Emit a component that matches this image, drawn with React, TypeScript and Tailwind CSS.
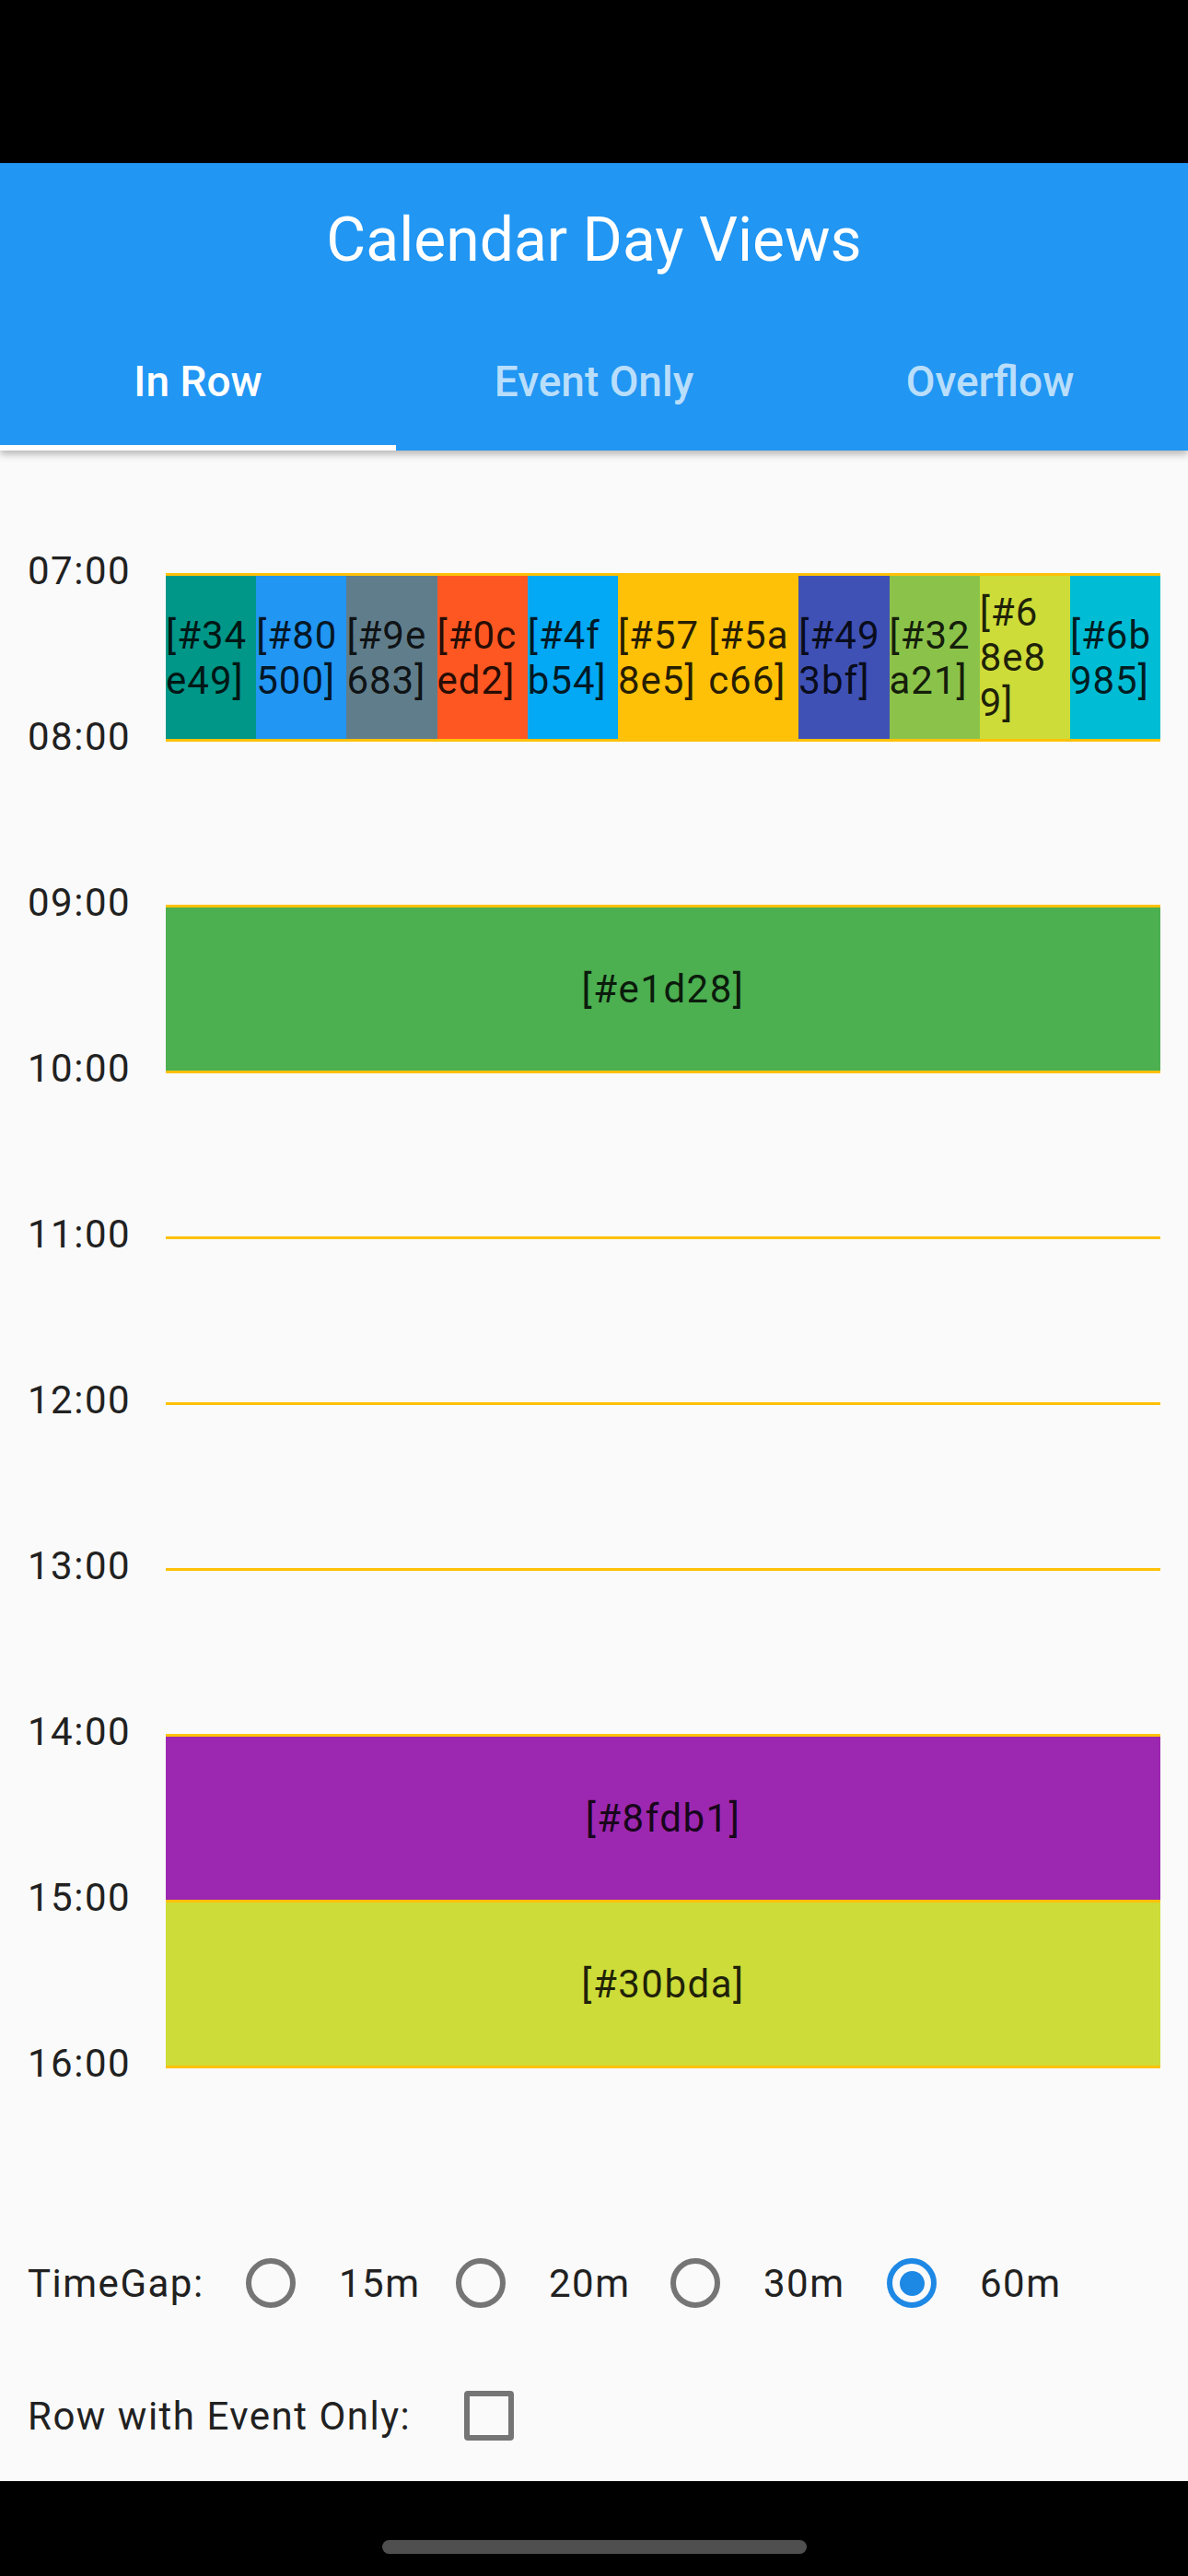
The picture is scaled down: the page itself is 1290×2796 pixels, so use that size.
import React from "react";

type Col = { bg: string; lines: string[] };

const multi: Col[] = [
  { bg: "bg-[#009688]", lines: ["[#34", "e49]"] },
  { bg: "bg-[#2196f3]", lines: ["[#80", "500]"] },
  { bg: "bg-[#607d8b]", lines: ["[#9e", "683]"] },
  { bg: "bg-[#ff5722]", lines: ["[#0c", "ed2]"] },
  { bg: "bg-[#03a9f4]", lines: ["[#4f", "b54]"] },
  { bg: "bg-[#ffc107]", lines: ["[#57", "8e5]"] },
  { bg: "bg-[#ffc107]", lines: ["[#5a", "c66]"] },
  { bg: "bg-[#3f51b5]", lines: ["[#49", "3bf]"] },
  { bg: "bg-[#8bc34a]", lines: ["[#32", "a21]"] },
  { bg: "bg-[#cddc39]", lines: ["[#6", "8e8", "9]"] },
  { bg: "bg-[#00bcd4]", lines: ["[#6b", "985]"] },
];

type Row = { h: string; kind: "multi" | "single" | "empty"; bg?: string; text?: string };

const rows: Row[] = [
  { h: "07:00", kind: "multi" },
  { h: "08:00", kind: "empty" },
  { h: "09:00", kind: "single", bg: "bg-[#4caf50]", text: "[#e1d28]" },
  { h: "10:00", kind: "empty" },
  { h: "11:00", kind: "empty" },
  { h: "12:00", kind: "empty" },
  { h: "13:00", kind: "empty" },
  { h: "14:00", kind: "single", bg: "bg-[#9c27b0]", text: "[#8fdb1]" },
  { h: "15:00", kind: "single", bg: "bg-[#cddc39]", text: "[#30bda]" },
];

function Label({ text }: { text: string }) {
  return (
    <div className="w-[180px] shrink-0 pl-[30px]">
      <div className="-mt-[27px] text-[42px] leading-[49px] tracking-[1.5px] text-[#212121] whitespace-nowrap">
        {text}
      </div>
    </div>
  );
}

function Radio({ checked }: { checked?: boolean }) {
  return (
    <div
      className={
        checked
          ? "w-[54px] h-[54px] shrink-0 rounded-full border-[6px] border-[#1e88e5] flex items-center justify-center"
          : "w-[54px] h-[54px] shrink-0 rounded-full border-[6px] border-[#757575]"
      }
    >
      {checked && <div className="w-[27px] h-[27px] rounded-full bg-[#1e88e5]" />}
    </div>
  );
}

export default function App() {
  return (
    <div className="w-[1290px] h-[2796px] flex flex-col bg-[#fafafa] font-['Roboto',sans-serif] overflow-hidden">
      {/* status bar */}
      <div className="h-[177px] shrink-0 bg-black" />

      {/* app bar */}
      <div className="relative z-10 shrink-0 bg-[#2196f3] shadow-[0_4px_8px_rgba(0,0,0,0.28)]">
        <div className="h-[168px] flex items-center justify-center">
          <span className="text-white text-[66px] font-normal leading-none">Calendar Day Views</span>
        </div>
        <div className="h-[144px] grid grid-cols-3">
          {[
            { t: "In Row", sel: true },
            { t: "Event Only", sel: false },
            { t: "Overflow", sel: false },
          ].map((tab) => (
            <div key={tab.t} className="flex flex-col">
              <div
                className={
                  tab.sel
                    ? "flex-1 flex items-center justify-center text-[46px] font-medium text-white"
                    : "flex-1 flex items-center justify-center text-[46px] font-medium text-white/70"
                }
              >
                {tab.t}
              </div>
              <div className={tab.sel ? "h-[6px] bg-white" : "h-[6px]"} />
            </div>
          ))}
        </div>
      </div>

      {/* body */}
      <div className="flex-1 flex flex-col pt-[133px] pr-[30px]">
        {rows.map((r) => (
          <div key={r.h} className="flex h-[180px]">
            <Label text={r.h} />
            <div className="flex-1 border-t-[3px] border-[#ffc107] flex">
              {r.kind === "multi" &&
                multi.map((c, i) => (
                  <div
                    key={i}
                    className={`${c.bg} flex-1 min-w-0 flex flex-col justify-center text-[42px] leading-[49px] tracking-[1px] text-[rgba(0,0,0,0.87)] overflow-hidden`}
                  >
                    {c.lines.map((l, j) => (
                      <span key={j} className="whitespace-nowrap">
                        {l}
                      </span>
                    ))}
                  </div>
                ))}
              {r.kind === "single" && (
                <div
                  className={`${r.bg} flex-1 flex items-center justify-center text-[42px] leading-[49px] tracking-[1.5px] text-[rgba(0,0,0,0.87)]`}
                >
                  {r.text}
                </div>
              )}
            </div>
          </div>
        ))}
        <div className="flex h-[3px]">
          <Label text="16:00" />
          <div className="flex-1 h-[3px] bg-[#ffc107]" />
        </div>

        {/* TimeGap row */}
        <div className="mt-[206px] h-[54px] flex items-center pl-[30px] text-[42px] leading-[49px] tracking-[1.5px] text-[#212121]">
          <span className="w-[237px] shrink-0">TimeGap:</span>
          <Radio />
          <span className="ml-[47px] w-[127px] shrink-0">15m</span>
          <Radio />
          <span className="ml-[47px] w-[132px] shrink-0">20m</span>
          <Radio />
          <span className="ml-[47px] w-[134px] shrink-0">30m</span>
          <Radio checked />
          <span className="ml-[47px] shrink-0">60m</span>
        </div>

        {/* Row with event only */}
        <div className="mt-[90px] h-[54px] flex items-center pl-[30px] text-[42px] leading-[49px] tracking-[1.5px] text-[#212121]">
          <span className="w-[474px] shrink-0">Row with Event Only:</span>
          <div className="w-[54px] h-[54px] shrink-0 rounded-[4px] border-[6px] border-[#757575]" />
        </div>
      </div>

      {/* nav bar */}
      <div className="h-[103px] shrink-0 bg-black flex justify-center pt-[64px]">
        <div className="w-[461px] h-[15px] rounded-full bg-[#4f4f4f]" />
      </div>
    </div>
  );
}
